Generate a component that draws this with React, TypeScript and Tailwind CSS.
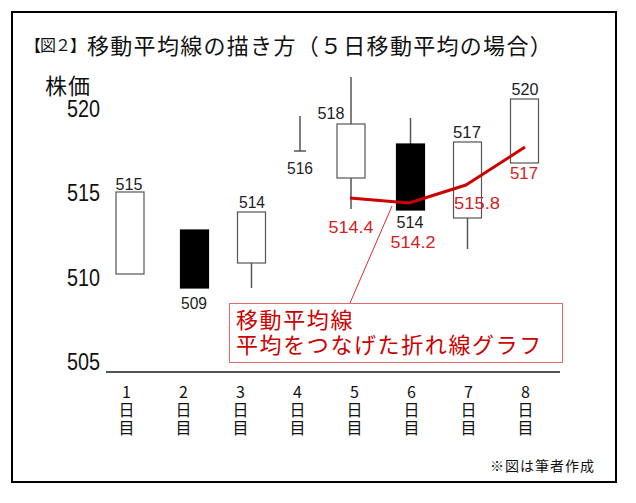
import type { FC, JSX } from "react";

interface Candle {
  x: number;
  top: number;
  bottom: number;
  filled: boolean;
  high?: number;
  low?: number;
}

interface Label {
  text: string;
  x: number;
  y: number;
  w: number;
  red?: boolean;
}

const CANDLES: readonly Candle[] = [
  { x: 130, top: 192, bottom: 274, filled: false },
  { x: 194.5, top: 230, bottom: 288, filled: true },
  { x: 251.5, top: 212, bottom: 263, filled: false, low: 288 },
  { x: 351, top: 124, bottom: 178, filled: false, high: 77, low: 209 },
  { x: 410.5, top: 144, bottom: 210, filled: true, high: 118 },
  { x: 467.5, top: 142, bottom: 218, filled: false, low: 249 },
  { x: 524.5, top: 99, bottom: 163, filled: false },
];

const PRICE_LABELS: readonly Label[] = [
  { text: "515", x: 129, y: 184, w: 27 },
  { text: "509", x: 194, y: 303, w: 26 },
  { text: "514", x: 252, y: 202, w: 26 },
  { text: "516", x: 300, y: 168, w: 26 },
  { text: "518", x: 331, y: 113, w: 27 },
  { text: "514", x: 410, y: 222, w: 27 },
  { text: "517", x: 467, y: 132, w: 28 },
  { text: "520", x: 525, y: 89, w: 27 },
  { text: "514.4", x: 351, y: 227, w: 45, red: true },
  { text: "514.2", x: 413, y: 242, w: 45, red: true },
  { text: "515.8", x: 477, y: 203, w: 46, red: true },
  { text: "517", x: 524, y: 173, w: 28, red: true },
];

const Y_AXIS = [
  { text: "520", y: 109 },
  { text: "515", y: 193 },
  { text: "510", y: 278 },
  { text: "505", y: 362 },
];

const DAYS = ["1", "2", "3", "4", "5", "6", "7", "8"];

const SANS = "'Liberation Sans', Arial, sans-serif";
const CJK = "'Noto Sans CJK JP', 'Noto Sans', sans-serif";

const Chart: FC = (): JSX.Element => (
  <svg
    width={602}
    height={326}
    viewBox="13 58 602 326"
    className="block"
    aria-label="5日移動平均のローソク足チャート"
  >
    <text x={45} y={84} fontSize={22} fontFamily={CJK} dominantBaseline="central" letterSpacing={1} fill="#111">
      株価
    </text>

    {Y_AXIS.map((l) => (
      <text
        key={l.text}
        x={83.5}
        y={l.y}
        fontSize={23}
        fontFamily={SANS}
        textAnchor="middle"
        dominantBaseline="central"
        textLength={33}
        lengthAdjust="spacingAndGlyphs"
        fill="#111"
      >
        {l.text}
      </text>
    ))}

    <line x1={106} y1={372} x2={560} y2={372} stroke="#555" strokeWidth={2} />

    {/* candles */}
    {CANDLES.map((c, i) => (
      <g key={i}>
        {c.high !== undefined && (
          <line x1={c.x} y1={c.high} x2={c.x} y2={c.top} stroke="#555" strokeWidth={1.5} />
        )}
        {c.low !== undefined && (
          <line x1={c.x} y1={c.bottom} x2={c.x} y2={c.low} stroke="#555" strokeWidth={1.5} />
        )}
        <rect
          x={c.x - 14}
          y={c.top}
          width={28}
          height={c.bottom - c.top}
          fill={c.filled ? "#000" : "#fff"}
          stroke={c.filled ? "#000" : "#555"}
          strokeWidth={1.2}
        />
      </g>
    ))}

    {/* day 4 doji */}
    <line x1={300} y1={116} x2={300} y2={151} stroke="#555" strokeWidth={1.5} />
    <line x1={294} y1={151} x2={306} y2={151} stroke="#555" strokeWidth={1.5} />

    {/* moving average */}
    <polyline
      points="350,198 409,203 466,185 525,147"
      fill="none"
      stroke="#cc0000"
      strokeWidth={3}
      strokeLinejoin="round"
    />
    <line x1={392} y1={206} x2={350} y2={303} stroke="#d03030" strokeWidth={1} />

    {PRICE_LABELS.map((l, i) => (
      <text
        key={i}
        x={l.x}
        y={l.y}
        fontSize={17}
        fontFamily={SANS}
        textAnchor="middle"
        dominantBaseline="central"
        textLength={l.w}
        lengthAdjust="spacingAndGlyphs"
        fill={l.red ? "#d42222" : "#222"}
      >
        {l.text}
      </text>
    ))}
  </svg>
);

const App: FC = (): JSX.Element => {
  return (
    <div className="min-h-[503px] w-[636px] bg-white pt-[11px] pl-[11px]">
      <div
        className="relative flex h-[472px] w-[606px] flex-col border-2 border-black"
        style={{ fontFamily: CJK }}
      >
        {/* Title */}
        <div className="flex h-[45px] items-end pl-[12px] leading-[28px] text-[#111]">
          <span className="text-[16px] tracking-[-1px]">【図２】</span>
          <span className="ml-[2px] text-[22px] tracking-[1.3px]">
            移動平均線の描き方（５日移動平均の場合）
          </span>
        </div>

        <Chart />

        {/* x axis labels, set vertically */}
        <div className="flex h-[56px] pl-[85px] text-[#111]">
          {DAYS.map((d) => (
            <div key={d} className="flex w-[57px] justify-center">
              <span className="text-[16px] leading-[16px] tracking-[2px] [writing-mode:vertical-rl] [text-orientation:upright]">
                {d}日目
              </span>
            </div>
          ))}
        </div>

        {/* Callout */}
        <p className="absolute left-[216px] top-[290px] h-[60px] w-[334px] border border-[#e36a6a] bg-white pl-[6px] pt-[2px] text-[22px] leading-[25px] tracking-[1.6px] text-[#cc0000]">
          移動平均線
          <br />
          平均をつなげた折れ線グラフ
        </p>

        {/* Footer */}
        <div className="flex flex-1 justify-end pr-[20px] pt-[16px] text-[14px] leading-[18px] tracking-[1px] text-[#111]">
          ※図は筆者作成
        </div>
      </div>
    </div>
  );
};

export default App;
